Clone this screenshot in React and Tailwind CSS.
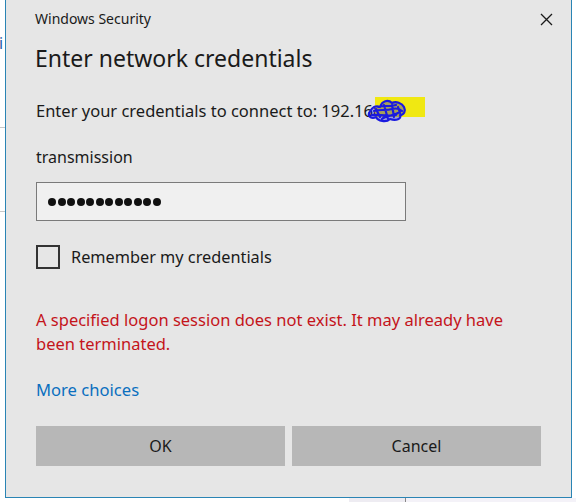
import React from "react";

function Scribble() {
  return (
    <svg width="44" height="30" viewBox="0 0 44 30" className="absolute left-[365px] top-[95px]">
      <path
        d="M3 18 C6 12 10 10 14 12 C16 6 22 4 26 8 C30 6 36 8 38 12 C40 16 38 20 34 20 C36 24 30 26 24 24 C20 28 12 26 10 22 C6 24 2 22 3 18 Z M8 16 C14 14 20 16 26 14 C30 13 34 14 36 16 M6 20 C12 19 20 22 30 20 M12 12 C18 10 24 12 30 10 M16 24 C20 20 26 22 32 18 M10 14 L14 22 M18 10 L22 24 M26 10 L28 22 M32 12 L34 18"
        fill="#1a1adf"
        fillOpacity="0.35"
        stroke="#1a1adf"
        strokeWidth="2.2"
        strokeLinecap="round"
        strokeLinejoin="round"
      />
    </svg>
  );
}

export default function App() {
  const font = { fontFamily: '"Segoe UI", "Noto Sans", "Open Sans", sans-serif' };
  return (
    <div className="w-[576px] h-[502px] bg-white overflow-hidden relative" style={font}>
      <div className="flex h-[498px]">
        {/* left strip */}
        <div className="w-[5px] shrink-0 relative bg-white overflow-hidden">
          <div className="absolute left-[-1px] top-[31px] text-[16px] text-[#1f5fa8] leading-[24px]">i</div>
          <div className="absolute left-0 top-[127px] w-[5px] h-px bg-[#c8c8c8]" />
          <div className="absolute left-0 top-[211px] w-[5px] h-px bg-[#c8c8c8]" />
        </div>
        {/* dialog */}
        <div className="w-[567px] shrink-0 bg-[#e6e6e6] border-l border-r border-b border-[#2a84b4] relative">
          <div className="flex items-center justify-between h-[36px] pl-[29px] pr-[18px]">
            <span className="text-[14px] text-[#1a1a1a]">Windows Security</span>
            <svg width="13" height="13" viewBox="0 0 13 13" className="mt-[2px]">
              <path d="M1 1 L12 12 M12 1 L1 12" stroke="#1a1a1a" strokeWidth="1.3" />
            </svg>
          </div>
          <div className="pl-[30px] pr-[30px]">
            <div className="mt-[6px] h-[32px] leading-[32px] text-[23px] text-[#1a1a1a] -ml-px">Enter network credentials</div>
            <div className="mt-[25px] h-[24px] leading-[24px] text-[16.5px] text-[#1a1a1a] relative">
              Enter your credentials to connect to: 192.168
            </div>
            <div className="mt-[22px] h-[24px] leading-[24px] text-[16px] text-[#1a1a1a]">transmission</div>
            <div className="mt-[13px] w-[370px] h-[39px] border border-[#7a7a7a] bg-[#f0f0f0] flex items-center pl-[11px] gap-[1.5px]">
              {Array.from({ length: 12 }).map((_, i) => (
                <div key={i} className="w-[8px] h-[8px] rounded-full bg-[#111]" />
              ))}
            </div>
            <div className="mt-[24px] h-[24px] flex items-center">
              <div className="w-[24px] h-[24px] border-2 border-[#333]" />
              <span className="ml-[11px] text-[16.3px] text-[#1a1a1a] leading-[24px]">Remember my credentials</span>
            </div>
            <div className="mt-[39px] text-[16.5px] leading-[24px] text-[#c4141b] w-[490px]">
              A specified logon session does not exist. It may already have been terminated.
            </div>
            <div className="mt-[22px] text-[16.6px] leading-[24px] text-[#0a6fbf]">More choices</div>
            <div className="mt-[24px] flex gap-[7px]">
              <div className="w-[250px] h-[40px] bg-[#b7b7b7] flex items-center justify-center text-[16px] text-[#1a1a1a]">OK</div>
              <div className="w-[250px] h-[40px] bg-[#b7b7b7] flex items-center justify-center text-[16px] text-[#1a1a1a]">Cancel</div>
            </div>
          </div>
          <div className="absolute left-[369px] top-[97px] w-[50px] h-[20px] bg-[#f0e812]" />
          <div className="absolute left-[-5px] top-0">
            <Scribble />
          </div>
        </div>
        <div className="flex-1 bg-white" />
      </div>
      <div className="h-[4px] flex">
        <div className="w-[349px]" />
        <div className="w-[56px] bg-[#eeecf2]" />
        <div className="w-px bg-[#888]" />
        <div className="flex-1 bg-[#f4f2f8]" />
      </div>
    </div>
  );
}
